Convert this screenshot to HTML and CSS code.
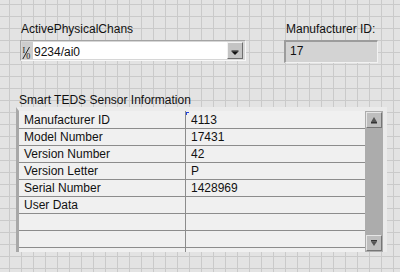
FILE: index.html
```html
<!DOCTYPE html>
<html lang="en">
<head>
    <meta charset="UTF-8">
    <meta name="viewport" content="width=device-width, initial-scale=1.0">
    <title>Smart TEDS</title>
    <link rel="stylesheet" href="styles.css">
</head>
<body>
    <div class="top">
        <div class="control chans">
            <div class="label">ActivePhysicalChans</div>
            <div class="combo">
                <span class="radix">
                    <svg width="11" height="18" viewBox="0 0 11 18">
                        <text x="0.5" y="10.5" class="radix-txt">I</text>
                        <line x1="0.8" y1="17" x2="7.5" y2="5" stroke="#111" stroke-width="0.9"/>
                        <text x="4.2" y="17" class="radix-txt">0</text>
                    </svg>
                </span>
                <span class="combo-text">9234/ai0</span>
                <span class="combo-btn">
                    <svg width="14" height="16" viewBox="0 0 14 16">
                        <rect x="3.5" y="7.5" width="7" height="1" fill="#111"/>
                        <polygon points="3.5,8.5 10.5,8.5 7,12" fill="#111"/>
                    </svg>
                </span>
            </div>
        </div>
        <div class="control maker">
            <div class="label">Manufacturer ID:</div>
            <div class="indicator">17</div>
        </div>
    </div>

    <div class="section">
        <div class="label">Smart TEDS Sensor Information</div>
        <div class="table">
            <div class="rows">
                <div class="row"><span class="key">Manufacturer ID</span><span class="val active">4113</span></div>
                <div class="row"><span class="key">Model Number</span><span class="val">17431</span></div>
                <div class="row"><span class="key">Version Number</span><span class="val">42</span></div>
                <div class="row"><span class="key">Version Letter</span><span class="val">P</span></div>
                <div class="row"><span class="key">Serial Number</span><span class="val">1428969</span></div>
                <div class="row"><span class="key">User Data</span><span class="val"></span></div>
                <div class="row"><span class="key"></span><span class="val"></span></div>
                <div class="row"><span class="key"></span><span class="val"></span></div>
            </div>
            <div class="scroll">
                <div class="sbtn">
                    <svg width="14" height="14" viewBox="0 0 14 14">
                        <polygon points="4,9 10,9 7,4" fill="#555"/>
                        <rect x="4" y="9" width="6" height="1.5" fill="#333"/>
                    </svg>
                </div>
                <div class="track"></div>
                <div class="sbtn">
                    <svg width="14" height="14" viewBox="0 0 14 14">
                        <rect x="4" y="4" width="6" height="1.5" fill="#333"/>
                        <polygon points="4,5.5 10,5.5 7,10" fill="#555"/>
                    </svg>
                </div>
            </div>
        </div>
    </div>
</body>
</html>
```

FILE: styles.css
```css
* {
    box-sizing: border-box;
}

body {
    margin: 0;
    padding-top: 22px;
    font-family: 'Liberation Sans', Arial, sans-serif;
    font-size: 12px;
    color: #111;
    background-color: #e3e3e3;
    background-image:
        linear-gradient(to right, #cacaca 1px, transparent 1px),
        linear-gradient(to bottom, #cacaca 1px, transparent 1px);
    background-size: 12px 12px;
    background-position: 9px 4px;
}

.label {
    line-height: 14px;
    white-space: nowrap;
}

.top {
    display: flex;
}

.chans {
    margin-left: 20px;
}

.chans .label {
    padding-left: 1px;
}

.maker {
    margin-left: 38px;
}

.maker .label {
    padding-left: 2px;
}

/* ring / combo control */
.combo {
    display: flex;
    width: 226px;
    height: 21px;
    margin-top: 4px;
    padding: 1px 2px 1px 1px;
    background: #d6d6d6;
    border-top: 1px solid #a4a4a4;
    border-left: 1px solid #a4a4a4;
    border-right: 1px solid #f7f7f7;
    border-bottom: 1px solid #f7f7f7;
}

.radix {
    width: 11px;
    background: #cdcdcd;
}

.radix svg {
    display: block;
}

.radix-txt {
    font-family: 'Liberation Serif', serif;
    font-size: 8px;
    fill: #111;
}

.combo-text {
    flex: 1;
    background: #fff;
    padding-left: 1px;
    line-height: 18px;
    padding-top: 1px;
}

.combo-btn {
    width: 16px;
    background: #c4c4c4;
    border-top: 1px solid #f2f2f2;
    border-left: 1px solid #f2f2f2;
    border-right: 1px solid #6e6e6e;
    border-bottom: 1px solid #6e6e6e;
}

.combo-btn svg {
    display: block;
}

/* numeric indicator */
.indicator {
    width: 94px;
    height: 23px;
    margin-top: 4px;
    padding-left: 4px;
    line-height: 19px;
    background: #d3d3d3;
    border-top: 2px solid #9c9c9c;
    border-left: 2px solid #9c9c9c;
    border-right: 1px solid #f2f2f2;
    border-bottom: 1px solid #f2f2f2;
}

/* table */
.section {
    margin-top: 30px;
    margin-left: 16px;
}

.section .label {
    padding-left: 3px;
}

.table {
    display: flex;
    width: 371px;
    height: 145px;
    border-left: 3px solid #a8a8a8;
    border-top: 4px solid #ebebeb;
    border-right: 4px solid #ebebeb;
}

.rows {
    width: 346px;
    padding-top: 1px;
    background: linear-gradient(#8c8c8c, #8c8c8c) no-repeat 166px 0 / 1px 100%, #f0f0f0;
}

.row {
    display: flex;
    height: 17px;
    line-height: 16px;
    border-bottom: 1px solid #8c8c8c;
    white-space: nowrap;
}

.key {
    width: 167px;
    padding-left: 5px;
    border-right: 1px solid #8c8c8c;
}

.val {
    flex: 1;
    padding-left: 5px;
}

.val.active {
    position: relative;
}

.val.active::before {
    content: '';
    position: absolute;
    left: 0;
    top: 0;
    width: 2px;
    height: 2px;
    border-top: 1px solid #2244dd;
    border-left: 1px solid #2244dd;
}

.scroll {
    width: 18px;
    display: flex;
    flex-direction: column;
    padding: 1px;
    background: #acacac;
}

.sbtn {
    width: 16px;
    height: 16px;
    background: #bebebe;
    border-top: 1px solid #e6e6e6;
    border-left: 1px solid #e6e6e6;
    border-right: 1px solid #767676;
    border-bottom: 1px solid #767676;
}

.sbtn svg {
    display: block;
}

.track {
    flex: 1;
}
```
